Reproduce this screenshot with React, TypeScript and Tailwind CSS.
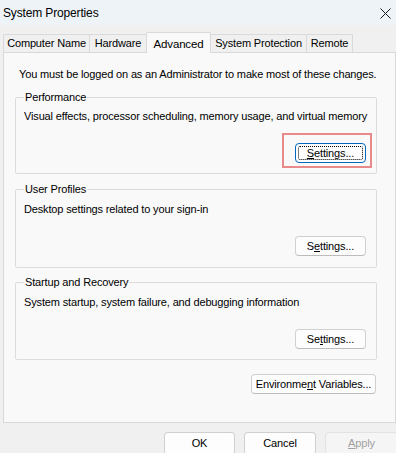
import React from "react";

function Btn({
  children,
  focused = false,
  disabled = false,
  className = "",
}: {
  children: React.ReactNode;
  focused?: boolean;
  disabled?: boolean;
  className?: string;
}) {
  const border = focused
    ? "border-[#0067c0]"
    : disabled
      ? "border-[#e2e2e2]"
      : "border-[#d0d0d0] border-b-[#bcbcbc]";
  return (
    <button
      className={`flex items-center justify-center whitespace-nowrap rounded-[4px] border leading-none ${border} ${
        disabled ? "bg-[#f5f5f5] text-[#a0a0a0]" : "bg-[#fdfdfd] text-black"
      } ${className}`}
    >
      {focused ? (
        <span className="flex h-full w-full items-center justify-center rounded-[2px] border border-dotted border-black">
          {children}
        </span>
      ) : (
        children
      )}
    </button>
  );
}

function Group({
  title,
  text,
  children,
  className = "",
  textGap = "mt-[3px]",
}: {
  title: string;
  text: string;
  children: React.ReactNode;
  className?: string;
  textGap?: string;
}) {
  return (
    <fieldset className={`w-[362px] rounded-[2px] border border-[#dcdcdc] px-[8px] ${className}`}>
      <legend className="px-[1px] leading-[16px]">{title}</legend>
      <div className={`${textGap} whitespace-nowrap leading-[16px]`}>{text}</div>
      <div className="mt-[19px] flex justify-end pr-[2px]">{children}</div>
    </fieldset>
  );
}

const tabs = [
  { label: "Computer Name", w: "w-[87px]" },
  { label: "Hardware", w: "w-[58px]" },
  { label: "Advanced", w: "w-[65px]", active: true },
  { label: "System Protection", w: "w-[97px]" },
  { label: "Remote", w: "w-[47px]" },
];

export default function App() {
  return (
    <div className="h-[453px] w-[396px] overflow-hidden bg-[#f0f0f0] font-['Liberation_Sans',Arial,sans-serif] text-[11px] tracking-[-0.15px] text-black">
      <div className="flex h-[25px] items-center justify-between bg-[#eef3f8] pl-[3px] pr-[3px]">
        <span className="text-[12px] leading-none">System Properties</span>
        <svg width="11" height="11" viewBox="0 0 11 11" className="mr-[2px] mt-[1px]">
          <path d="M0.5 0.5L10.5 10.5M10.5 0.5L0.5 10.5" stroke="#1a1a1a" strokeWidth="1" />
        </svg>
      </div>

      <div className="pl-[3px] pt-[7px]">
        <div className="flex h-[20px] items-end">
          {tabs.map((t) =>
            t.active ? (
              <div
                key={t.label}
                className={`${t.w} relative z-10 -mb-px -ml-px flex h-[21px] items-start justify-center whitespace-nowrap rounded-t-[2px] border border-b-0 border-[#d9d9d9] bg-[#f9f9f9] pt-[3px] text-[11.5px]`}
              >
                {t.label}
              </div>
            ) : (
              <div
                key={t.label}
                className={`${t.w} -ml-px flex h-[18px] items-center justify-center whitespace-nowrap border border-b-0 border-[#dadada] bg-[#f0f0f0] first:ml-0`}
              >
                {t.label}
              </div>
            )
          )}
        </div>

        <div className="h-[371px] w-[393px] border border-[#d9d9d9] bg-[#f9f9f9] pl-[11px] pt-[13px]">
          <div className="ml-[4px] whitespace-nowrap leading-[16px]">
            You must be logged on as an Administrator to make most of these changes.
          </div>

          <Group
            className="mt-[7px] pb-[10px]"
            title="Performance"
            text="Visual effects, processor scheduling, memory usage, and virtual memory"
          >
            <div className="relative">
              <Btn focused className="h-[20px] w-[71px] p-[2px]">
                <span>
                  <u>S</u>ettings...
                </span>
              </Btn>
              <div className="pointer-events-none absolute -bottom-[5px] -left-[13px] -right-[6px] -top-[10px] border-2 border-[#e88a8a]" />
            </div>
          </Group>

          <Group
            className="mt-[7px] pb-[11px]"
            textGap="mt-[4px]"
            title="User Profiles"
            text="Desktop settings related to your sign-in"
          >
            <Btn className="h-[20px] w-[71px]">
              <span>
                S<u>e</u>ttings...
              </span>
            </Btn>
          </Group>

          <Group
            className="mt-[6px] pb-[10px]"
            textGap="mt-[4px]"
            title="Startup and Recovery"
            text="System startup, system failure, and debugging information"
          >
            <Btn className="h-[20px] w-[71px]">
              <span>
                Se<u>t</u>tings...
              </span>
            </Btn>
          </Group>

          <div className="mt-[14px] flex w-[362px] justify-end pr-[1px]">
            <Btn className="h-[20px] w-[125px]">
              <span>
                Environme<u>n</u>t Variables...
              </span>
            </Btn>
          </div>
        </div>
      </div>

      <div className="mt-[9px] flex justify-end gap-[9px]">
        <Btn className="h-[23px] w-[71px]">OK</Btn>
        <Btn className="h-[23px] w-[72px]">Cancel</Btn>
        <Btn disabled className="-mr-[2px] h-[23px] w-[73px]">
          <span>
            <u>A</u>pply
          </span>
        </Btn>
      </div>
    </div>
  );
}
